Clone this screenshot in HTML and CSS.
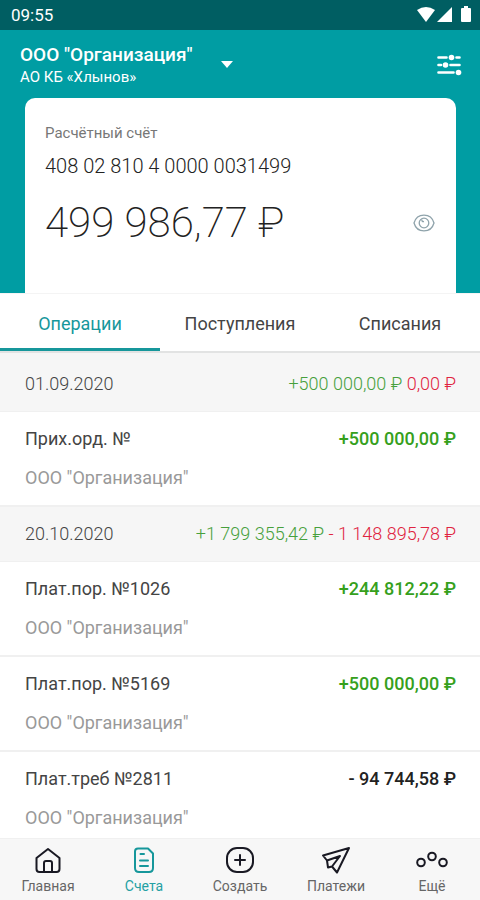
FILE: index.html
```html
<!DOCTYPE html>
<html lang="ru">
<head>
    <meta charset="UTF-8">
    <meta name="viewport" content="width=device-width, initial-scale=1.0">
    <title>Счета</title>
    <link rel="stylesheet" href="styles.css">
</head>
<body>
    <div class="app">
        <div class="status-bar">
            <span>09:55</span>
            <svg width="56" height="18" viewBox="0 0 56 18" fill="#fff">
                <path d="M1 4Q10 -2 19 4L10 16Z"/>
                <path d="M21 16L36 1V16Z"/>
                <path d="M45 3Q45 2 46 2H48V0H52V2H54Q55 2 55 3V15Q55 16 54 16H46Q45 16 45 15Z"/>
            </svg>
        </div>

        <header class="header">
            <div class="org-row">
                <button type="button" class="org-button">
                    <span class="org-text">
                        <span class="org-name">ООО "Организация"</span>
                        <span class="org-bank">АО КБ «Хлынов»</span>
                    </span>
                    <svg width="12" height="8" viewBox="0 0 12 8" fill="#fff"><path d="M0 0H12L6 7Z"/></svg>
                </button>
                <button type="button" class="icon-button" aria-label="Фильтр">
                    <svg width="26" height="22" viewBox="0 0 26 22" stroke="#fff" stroke-width="2.600" stroke-linecap="round">
                        <path d="M2.500 3.500H10.500M20.500 3.500H23.500M2.500 11H5M14.500 11H23.500M2.500 18.500H17.500"/>
                        <g fill="#fff" stroke="none">
                            <circle cx="15.500" cy="3.500" r="2.800"/>
                            <circle cx="9.500" cy="11" r="2.800"/>
                            <circle cx="22.500" cy="18.500" r="2.800"/>
                        </g>
                    </svg>
                </button>
            </div>

            <section class="account">
                <div class="account-label">Расчётный счёт</div>
                <div class="account-number">408 02 810 4 0000 0031499</div>
                <div class="balance-row">
                    <span class="balance">499 986,77 ₽</span>
                    <button type="button" class="icon-button" aria-label="Скрыть баланс">
                        <svg width="22" height="18" viewBox="0 0 22 18" fill="none" stroke="#8fa3ab" stroke-width="1.300">
                            <path d="M1 9C4 -1.500 18 -1.500 21 9C18 19.500 4 19.500 1 9Z"/>
                            <circle cx="11" cy="9" r="4.800"/>
                            <path d="M9 5.500Q8.500 8 11 7.500"/>
                        </svg>
                    </button>
                </div>
            </section>
        </header>

        <div class="tabs">
            <button type="button" class="tab active">Операции</button>
            <button type="button" class="tab">Поступления</button>
            <button type="button" class="tab">Списания</button>
        </div>

        <main class="operations">
            <div class="day">
                <span>01.09.2020</span>
                <span><span class="income">+500 000,00 ₽</span> <span class="expense">0,00 ₽</span></span>
            </div>
            <div class="operation">
                <div class="operation-row">
                    <span>Прих.орд. №</span>
                    <span class="amount plus">+500 000,00 ₽</span>
                </div>
                <div class="operation-org">ООО "Организация"</div>
            </div>
            <div class="day">
                <span>20.10.2020</span>
                <span><span class="income">+1 799 355,42 ₽</span> <span class="expense">- 1 148 895,78 ₽</span></span>
            </div>
            <div class="operation">
                <div class="operation-row">
                    <span>Плат.пор. №1026</span>
                    <span class="amount plus">+244 812,22 ₽</span>
                </div>
                <div class="operation-org">ООО "Организация"</div>
            </div>
            <div class="operation">
                <div class="operation-row">
                    <span>Плат.пор. №5169</span>
                    <span class="amount plus">+500 000,00 ₽</span>
                </div>
                <div class="operation-org">ООО "Организация"</div>
            </div>
            <div class="operation">
                <div class="operation-row">
                    <span>Плат.треб №2811</span>
                    <span class="amount">- 94 744,58 ₽</span>
                </div>
                <div class="operation-org">ООО "Организация"</div>
            </div>
        </main>

        <nav class="bottom-nav">
            <a href="#" class="nav-item">
                <svg width="32" height="28" viewBox="0 0 32 28">
                    <path d="M4.500 12L16 3L27.500 12V23Q27.500 26 24.500 26H7.500Q4.500 26 4.500 23Z"/>
                    <path d="M12 26V17Q12 15 14 15H18Q20 15 20 17V26"/>
                </svg>
                Главная
            </a>
            <a href="#" class="nav-item active">
                <svg width="32" height="28" viewBox="0 0 32 28">
                    <path d="M10 2.500H20L25 7.500V22Q25 26 21 26H11Q7 26 7 22V5.500Q7 2.500 10 2.500Z"/>
                    <path d="M12.500 8H16M12 14.500H20M12 20H20"/>
                </svg>
                Счета
            </a>
            <a href="#" class="nav-item">
                <svg width="32" height="28" viewBox="0 0 32 28">
                    <rect x="3" y="2" width="26" height="24" rx="10"/>
                    <path d="M16 9V19M11 14H21"/>
                </svg>
                Создать
            </a>
            <a href="#" class="nav-item">
                <svg width="32" height="28" viewBox="0 0 32 28">
                    <path d="M3 9.500L29 2L17 26.500L12 20.500L8 21.500L7 14.500ZM7 14.500L20 10M12 20.500L20 10"/>
                </svg>
                Платежи
            </a>
            <a href="#" class="nav-item">
                <svg width="32" height="28" viewBox="0 0 32 28">
                    <circle cx="5" cy="16.500" r="3.800"/>
                    <circle cx="16" cy="10.500" r="3.800"/>
                    <circle cx="27" cy="16.500" r="3.800"/>
                </svg>
                Ещё
            </a>
        </nav>
    </div>
</body>
</html>
```
FILE: styles.css
```css
* {
    box-sizing: border-box;
}

body {
    margin: 0;
    font-family: Roboto, sans-serif;
    font-size: 18px;
    line-height: 24px;
    color: #444;
    background-color: #fff;
}

button {
    padding: 0;
    border: none;
    background: none;
    font: inherit;
    color: inherit;
    cursor: pointer;
}

svg {
    display: block;
}

.app {
    display: flex;
    flex-direction: column;
    height: 100vh;
}

.status-bar {
    display: flex;
    justify-content: space-between;
    align-items: center;
    height: 30px;
    padding: 0 8px 0 11px;
    background-color: #005e62;
    color: #fff;
    font-size: 17px;
}

.header {
    padding: 13px 24px 0 25px;
    background-color: #009da3;
}

.org-row {
    display: flex;
    justify-content: space-between;
    align-items: center;
    margin: 0 -8px 11px -5px;
}

.org-button {
    display: flex;
    align-items: center;
    gap: 28px;
    color: #fff;
    text-align: left;
}

.org-name, .org-bank {
    display: block;
}

.org-name {
    font-size: 19px;
    font-weight: 500;
}

.org-bank {
    font-size: 15px;
    line-height: 20px;
}

.icon-button {
    padding: 2px;
}

.account {
    padding: 23px 19px 45px 20px;
    background-color: #fff;
    border-radius: 10px 10px 0 0;
}

.account-label {
    font-size: 15px;
    color: #777;
}

.account-number {
    margin: 9px 0 20px;
    font-size: 20px;
    font-weight: 300;
    color: #222;
}

.balance-row {
    display: flex;
    justify-content: space-between;
    align-items: center;
    line-height: 50px;
}

.balance {
    font-size: 42px;
    font-weight: 200;
    color: #222;
}

.tabs {
    display: grid;
    grid-template-columns: repeat(3, 1fr);
    height: 60px;
    border-top: 1px solid #f4f4f4;
    border-bottom: 2px solid #e2e3e3;
}

.tab {
    padding-top: 5px;
    border-bottom: 3px solid transparent;
}

.tab.active {
    border-color: #16979b;
    color: #16979b;
}

.operations {
    flex: 1;
    min-height: 0;
    overflow-y: auto;
    scrollbar-width: none;
}

.day {
    display: flex;
    justify-content: space-between;
    padding: 15px 24px 15px 25px;
    background-color: #f6f6f6;
    border-bottom: 1px solid #f0f0f0;
    font-weight: 300;
}

.day:first-child {
    padding-top: 19px;
}

.income {
    color: #46a03c;
}

.expense {
    color: #e02340;
}

.operation {
    padding: 15px 24px 15px 25px;
    border-bottom: 2px solid #f0f0f0;
}

.operation-row {
    display: flex;
    justify-content: space-between;
    margin-bottom: 15px;
}

.amount {
    font-weight: 500;
    color: #222;
}

.amount.plus {
    color: #36a01c;
}

.operation-org {
    color: #999;
}

.bottom-nav {
    display: grid;
    grid-template-columns: repeat(5, 1fr);
    height: 62px;
    padding-top: 7px;
    background-color: #f7f7f7;
    border-top: 1px solid #f0f0f0;
}

.nav-item {
    display: flex;
    flex-direction: column;
    align-items: center;
    font-size: 14px;
    color: #666;
    text-decoration: none;
}

.nav-item svg {
    fill: none;
    stroke: #191923;
    stroke-width: 2;
    stroke-linecap: round;
    stroke-linejoin: round;
}

.nav-item.active {
    color: #24a0a3;
}

.nav-item.active svg {
    stroke: #16979b;
}
```
